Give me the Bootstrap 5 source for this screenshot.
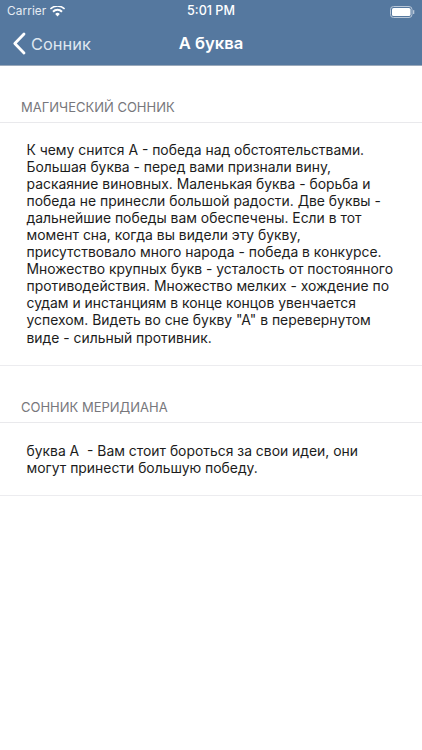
<!DOCTYPE html>
<html lang="ru">
<head>
<meta charset="utf-8">
<title>А буква</title>
<link rel="stylesheet" href="https://cdn.jsdelivr.net/npm/bootstrap@5.3.0/dist/css/bootstrap.min.css">
<style>
html,body{height:100%;}
body{background:#fff;font-family:Inter,"Liberation Sans",sans-serif;color:#111;overflow:hidden;}
.app-head{background:#55789f;height:66px;border-bottom:1px solid #9aa9bb;color:#fff;}
.status-row{height:21px;padding:2px 7px 0;font-size:11.8px;}
.status-side{width:130px;}
.carrier{color:#e6ecf3;letter-spacing:.1px;}
.clock{font-weight:500;font-size:12.6px;}
.nav-row{height:44px;position:relative;padding-top:2px;}
.back-lnk{color:#dfe7f0;font-size:16.4px;padding-left:12px;gap:5px;text-decoration:none;}
.nav-title{font-size:16.6px;font-weight:600;position:absolute;left:0;right:0;top:0;bottom:0;}
.sec-cap{font-size:13px;color:#77777c;padding:0 21px 7px;line-height:16px;border-bottom:1px solid #e9e9ec;}
.sec-body{font-size:13.9px;line-height:17.1px;color:#1c1c1c;padding:18.5px 26.5px 18.5px;white-space:nowrap;border-bottom:1px solid #ececef;}
.cap-a{padding-top:33px;}
.cap-b{padding-top:33px;}
.body-b{padding-top:19.5px;}
</style>
</head>
<body>
<header class="app-head">
  <div class="status-row d-flex align-items-center justify-content-between">
    <div class="status-side d-flex align-items-center gap-1 carrier">Carrier
      <svg width="15" height="11" viewBox="0 0 15 11" aria-hidden="true"><path d="M7.5 10.5 5.2 7.9a3.3 3.3 0 0 1 4.6 0zM3.7 6.4 2.3 4.9a7.4 7.4 0 0 1 10.4 0L11.3 6.4a5.4 5.4 0 0 0-7.6 0zM.9 3.5-.1 2.4a10.8 10.8 0 0 1 15.2 0L14.1 3.5a9.3 9.3 0 0 0-13.2 0z" fill="#fff"/></svg>
    </div>
    <div class="clock">5:01 PM</div>
    <div class="status-side d-flex justify-content-end align-items-center">
      <svg width="25" height="12" viewBox="0 0 25 12" aria-hidden="true"><rect x=".5" y=".5" width="21.5" height="11" rx="3" fill="none" stroke="#b9c7d8"/><rect x="2" y="2" width="18.5" height="8" rx="1.6" fill="#fff"/><rect x="23" y="4" width="1.3" height="4" rx=".6" fill="#b9c7d8"/></svg>
    </div>
  </div>
  <div class="nav-row d-flex align-items-center">
    <div class="nav-title d-flex align-items-center justify-content-center">А буква</div>
    <a class="back-lnk d-flex align-items-center position-relative" href="#">
      <svg width="14" height="23" viewBox="0 0 14 23" aria-hidden="true"><path d="M12 2 2.8 11.5 12 21" fill="none" stroke="#fff" stroke-width="2.8" stroke-linecap="round" stroke-linejoin="round"/></svg>
      Сонник
    </a>
  </div>
</header>
<main>
  <section>
    <div class="sec-cap cap-a">МАГИЧЕСКИЙ СОННИК</div>
    <div class="sec-body">К чему снится А - победа над обстоятельствами.<br>Большая буква - перед вами признали вину,<br>раскаяние виновных. Маленькая буква - борьба и<br>победа не принесли большой радости. Две буквы -<br>дальнейшие победы вам обеспечены. Если в тот<br>момент сна, когда вы видели эту букву,<br>присутствовало много народа - победа в конкурсе.<br>Множество крупных букв - усталость от постоянного<br>противодействия. Множество мелких - хождение по<br>судам и инстанциям в конце концов увенчается<br>успехом. Видеть во сне букву "А" в перевернутом<br>виде - сильный противник.</div>
  </section>
  <section>
    <div class="sec-cap cap-b">СОННИК МЕРИДИАНА</div>
    <div class="sec-body body-b">буква А&nbsp; - Вам стоит бороться за свои идеи, они<br>могут принести большую победу.</div>
  </section>
</main>
</body>
</html>
